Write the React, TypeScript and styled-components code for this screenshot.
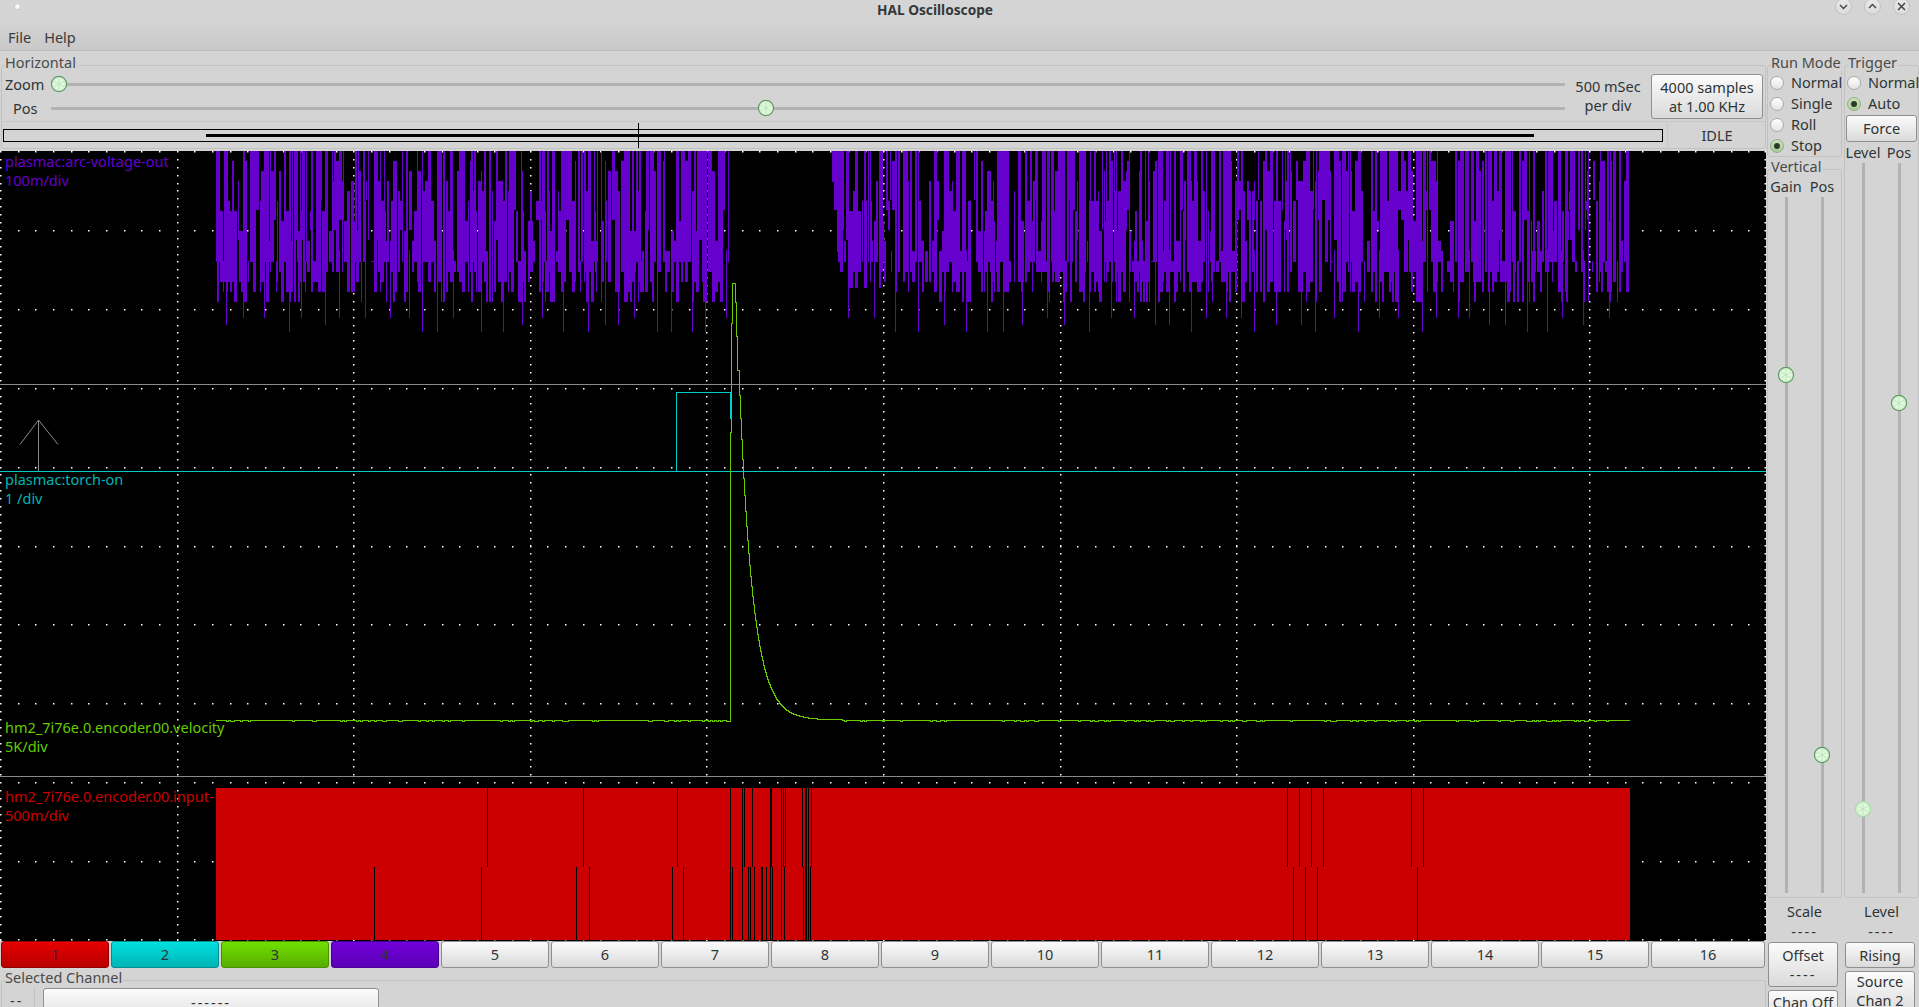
import styled, { createGlobalStyle } from "styled-components";

const TEXT = "#2e3436";
const PURPLE = "#6600cc";
const CYAN = "#00cccc";
const GREEN = "#66cc00";
const RED = "#cc0000";

const GlobalStyle = createGlobalStyle`
  html, body {
    margin: 0;
    padding: 0;
    background: #d4d4d4;
  }
  * {
    box-sizing: border-box;
  }
`;

// small seeded generator so the noise looks the same on every load
const makeRandom = (seed: number) => () => {
  seed = (seed + 0x6d2b79f5) | 0;
  let t = Math.imul(seed ^ (seed >>> 15), 1 | seed);
  t = (t + Math.imul(t ^ (t >>> 7), 61 | t)) ^ t;
  return ((t ^ (t >>> 14)) >>> 0) / 4294967296;
};

const bar = (x: number, top: number, bottom: number, w: number) =>
  `M${x} ${top}h${w}v${bottom - top}h${-w}z`;

const buildGrid = () => {
  let d = "";
  for (let i = 0; i <= 10; i++) {
    const y = Math.round(151 + 78.9 * i - (i === 10 ? 1 : 0));
    for (let x = 0; x < 1766; x += 17.66) d += bar(Math.round(x), y, y + 1.5, 1.5);
  }
  for (let j = 0; j <= 10; j++) {
    const x = j === 10 ? 1764.5 : Math.round(176.6 * j);
    for (let y = 151; y < 941; y += 7.89) d += bar(x, Math.round(y), Math.round(y) + 1.5, 1.5);
  }
  return d;
};

const buildVoltage = () => {
  const rnd = makeRandom(4711);
  let d = "";
  const span = (from: number, to: number) => {
    let x = from;
    let nextSpike = from + 10;
    while (x < to) {
      const w = Math.min([1, 1, 2, 2, 3][Math.floor(rnd() * 5)], to - x);
      let top = rnd() < 0.45 ? 151 : 151 + Math.floor(rnd() * 12) * 10;
      let bottom = rnd() < 0.15 ? 200 + Math.floor(rnd() * 5) * 10 : 262 + Math.floor(rnd() * 5) * 10;
      if (from > 800 && x < 880) {
        bottom = Math.min(bottom, Math.min(182 + (x - 832) * 14, 288));
        if (x < 838) top = 151;
      }
      if (top < bottom) d += bar(x, top, bottom, w);
      if (x >= nextSpike && (from < 800 || x > 846)) {
        d += bar(x, 250, 318 + Math.floor(rnd() * 3) * 7, 1);
        nextSpike = x + 10 + rnd() * 16;
      }
      x += w + (rnd() < 0.16 ? 1 : 0);
    }
  };
  span(216, 729);
  span(832, 1629);
  return d;
};

const buildVelocity = () => {
  const rnd = makeRandom(99);
  let d = "M216 720.5";
  for (let x = 218; x < 728; x += 2) d += `H${x}V${rnd() < 0.2 ? 721.5 : 720.5}`;
  d += "H730.5V432H731.5V323H732.5V283.5H735.5V302H736.5V336H737.5V370";
  for (let x = 738; x <= 840; x += 1) {
    const y = 720 - 437 * Math.exp(-(x - 735) / 13.5);
    d += `H${x + 0.5}V${y.toFixed(1)}`;
  }
  for (let x = 842; x <= 1630; x += 2) d += `H${x}V${rnd() < 0.2 ? 721.5 : 720.5}`;
  return d;
};

const upperGaps = [487, 583, 677, 730, 742, 744, 752, 770, 771, 781, 783, 785, 802, 805, 806, 808, 811, 1287, 1299, 1311, 1323, 1411, 1423];
const lowerGaps = [374, 481, 576, 589, 672, 683, 730, 732, 742, 748, 750, 754, 761, 762, 766, 770, 772, 781, 784, 803, 805, 806, 808, 810, 1293, 1305, 1317, 1417];

const buildInputGaps = () =>
  upperGaps.map((x) => bar(x, 788, 867, 1)).join("") +
  lowerGaps.map((x) => bar(x, 867, 940, 1)).join("");

const gridPath = buildGrid();
const voltagePath = buildVoltage();
const velocityPath = buildVelocity();
const inputGapPath = buildInputGaps();

const Thumb = ({ pale }: { pale?: boolean }) => (
  <svg width="17" height="17" viewBox="0 0 17 17">
    <circle cx="8.5" cy="8.5" r="7.6" fill="#d4f1cf" stroke={pale ? "#a8dca8" : "#5f9a68"} strokeWidth="1.2" />
    <circle cx="8.5" cy="8.5" r="5.6" fill="#e2f7df" />
    <path
      d="M8.5 3v11M3.7 5.7l9.6 5.6M3.7 11.3l9.6-5.6"
      stroke="#bfe8ba"
      strokeWidth="1"
    />
    <circle cx="8.5" cy="8.5" r="1.2" fill="#bfe8ba" />
  </svg>
);

const Scope = () => (
  <Canvas>
    <ScopeSvg width="1766" height="790" viewBox="0 151 1766 790">
      <GridDots d={gridPath} />
      <path d="M0 384.5H1766M0 776.5H1766" stroke="#8a8a8a" strokeWidth="1" />
      <path d={voltagePath} fill={PURPLE} />
      <path d="M0 471.5H1766" stroke={CYAN} strokeWidth="1" />
      <path d="M676.5 471V392.5H730.5V419" stroke={CYAN} strokeWidth="1" fill="none" />
      <path d={velocityPath} stroke={GREEN} strokeWidth="1" fill="none" />
      <path d="M216 788H1630V940H216z" fill={RED} />
      <path d={inputGapPath} fill="#000" />
      <ArrowMark d="M38.5 471V420M20 444.5L38.5 420L58 444.5" />
    </ScopeSvg>
    <TraceLabel $color={PURPLE} $top={1}>
      plasmac:arc-voltage-out
      <br />
      100m/div
    </TraceLabel>
    <TraceLabel $color="#00b4b4" $top={319}>
      plasmac:torch-on
      <br />1 /div
    </TraceLabel>
    <TraceLabel $color={GREEN} $top={567}>
      hm2_7i76e.0.encoder.00.velocity
      <br />
      5K/div
    </TraceLabel>
    <TraceLabel $color={RED} $top={636}>
      hm2_7i76e.0.encoder.00.input-
      <br />
      500m/div
    </TraceLabel>
  </Canvas>
);

const channelColors: Record<number, [string, string, string]> = {
  1: ["#e60000", "#b80000", "#8f0000"],
  2: ["#00e0e0", "#00b4b4", "#008f8f"],
  3: ["#70e000", "#58ac00", "#4a8f00"],
  4: ["#7000d8", "#5c00b8", "#4a0096"],
};

const App = () => (
  <Page>
    <GlobalStyle />
    <Header>
      <TitleBar>
        <WindowDot />
        <Title>HAL Oscilloscope</Title>
        <WindowButtons>
          <WindowButton>
            <svg width="11" height="11" viewBox="0 0 11 11">
              <path d="M2 4l3.5 3.5L9 4" fill="none" stroke="#444" strokeWidth="1.4" />
            </svg>
          </WindowButton>
          <WindowButton>
            <svg width="11" height="11" viewBox="0 0 11 11">
              <path d="M2 7l3.5-3.5L9 7" fill="none" stroke="#444" strokeWidth="1.4" />
            </svg>
          </WindowButton>
          <WindowButton>
            <svg width="11" height="11" viewBox="0 0 11 11">
              <path d="M2 2l7 7M9 2l-7 7" fill="none" stroke="#444" strokeWidth="1.5" />
            </svg>
          </WindowButton>
        </WindowButtons>
      </TitleBar>
      <MenuBar>
        <MenuItem>File</MenuItem>
        <MenuItem>Help</MenuItem>
      </MenuBar>
    </Header>

    <Body>
      <MainColumn>
        <HorizontalFrame>
          <Legend>Horizontal</Legend>
          <ZoomArea>
            <SliderRows>
              <SliderRow>
                <RowLabel>Zoom</RowLabel>
                <HSlider>
                  <HThumb $pos={0.53}>
                    <Thumb />
                  </HThumb>
                </HSlider>
              </SliderRow>
              <SliderRow>
                <RowLabel $indent>Pos</RowLabel>
                <HSlider>
                  <HThumb $pos={47.2}>
                    <Thumb />
                  </HThumb>
                </HSlider>
              </SliderRow>
            </SliderRows>
            <TimeBase>
              500 mSec
              <br />
              per div
            </TimeBase>
            <SamplesButton>
              4000 samples
              <br />
              at 1.00 KHz
            </SamplesButton>
          </ZoomArea>
          <StatusArea>
            <RecordStrip>
              <RecordFill />
              <RecordCursor />
            </RecordStrip>
            <StateText>IDLE</StateText>
          </StatusArea>
        </HorizontalFrame>

        <Scope />

        <ChannelRow>
          {Array.from({ length: 16 }, (_, i) => (
            <ChannelButton key={i} $colors={channelColors[i + 1]}>
              {i + 1}
            </ChannelButton>
          ))}
        </ChannelRow>

        <SelectedFrame>
          <Legend>Selected Channel</Legend>
          <SelectedRow>
            <SelectedIndex>
              <Dashes>--</Dashes>
            </SelectedIndex>
            <SelectedButton>
              <Dashes>------</Dashes>
            </SelectedButton>
          </SelectedRow>
        </SelectedFrame>
      </MainColumn>

      <SideColumn>
        <VerticalSide>
          <RunFrame>
            <Legend>Run Mode</Legend>
            <Radio label="Normal" />
            <Radio label="Single" />
            <Radio label="Roll" />
            <Radio label="Stop" checked />
          </RunFrame>
          <VerticalFrame>
            <Legend>Vertical</Legend>
            <SliderHeads>
              <span>Gain</span>
              <span>Pos</span>
            </SliderHeads>
            <SliderPair $height={696}>
              <VSlider>
                <VThumb $pos={25.6}>
                  <Thumb />
                </VThumb>
              </VSlider>
              <VSlider>
                <VThumb $pos={80.2}>
                  <Thumb />
                </VThumb>
              </VSlider>
            </SliderPair>
          </VerticalFrame>
          <ReadOut>
            Scale
            <br />
            <Dashes>----</Dashes>
          </ReadOut>
          <OffsetButton>
            Offset
            <br />
            <Dashes>----</Dashes>
          </OffsetButton>
          <ChanOffButton>Chan Off</ChanOffButton>
        </VerticalSide>

        <TriggerSide>
          <TriggerFrame>
            <Legend>Trigger</Legend>
            <Radio label="Normal" />
            <Radio label="Auto" checked />
            <ForceButton>Force</ForceButton>
            <SliderHeads>
              <span>Level</span>
              <span>Pos</span>
            </SliderHeads>
            <SliderPair $height={730}>
              <VSlider>
                <VThumb $pos={88.5}>
                  <Thumb pale />
                </VThumb>
              </VSlider>
              <VSlider>
                <VThumb $pos={32.9}>
                  <Thumb />
                </VThumb>
              </VSlider>
            </SliderPair>
          </TriggerFrame>
          <ReadOut>
            Level
            <br />
            <Dashes>----</Dashes>
          </ReadOut>
          <RisingButton>Rising</RisingButton>
          <SourceButton>
            Source
            <br />
            Chan 2
          </SourceButton>
        </TriggerSide>
      </SideColumn>
    </Body>
  </Page>
);

const Radio = ({ label, checked }: { label: string; checked?: boolean }) => (
  <RadioRow>
    <RadioMark $checked={checked} />
    {label}
  </RadioRow>
);

const Page = styled.div`
  display: flex;
  flex-direction: column;
  width: 1919px;
  height: 1007px;
  overflow: hidden;
  background: #d4d4d4;
  color: ${TEXT};
  font: 14.5px/19px "Noto Sans", "DejaVu Sans", sans-serif;
`;

const Header = styled.header`
  display: flex;
  flex-direction: column;
  height: 51px;
  flex: none;
  background: linear-gradient(#d5d5d5 0%, #d4d4d4 40%, #c9c9c9 100%);
  border-bottom: 1px solid #bdbdbd;
`;

const TitleBar = styled.div`
  display: grid;
  grid-template-columns: 35px 1fr 84px;
  height: 20px;
`;

const WindowDot = styled.span`
  width: 7px;
  height: 7px;
  margin: 3px 0 0 14px;
  border-radius: 50%;
  background: #f8f8f8;
  border: 1px solid #c4c4c4;
`;

const Title = styled.div`
  text-align: center;
  font-size: 13.7px;
  font-weight: 700;
  line-height: 20px;
  color: #33393b;
`;

const WindowButtons = styled.div`
  display: flex;
  gap: 12px;
  margin-top: -2px;
  height: 17px;
`;

const WindowButton = styled.span`
  display: flex;
  align-items: center;
  justify-content: center;
  width: 17px;
  height: 17px;
  border-radius: 50%;
  background: linear-gradient(#e8e8e8, #dcdcdc);
  border: 1px solid #c0c0c0;
`;

const MenuBar = styled.nav`
  display: flex;
  gap: 13px;
  padding: 8px 0 0 8px;
`;

const MenuItem = styled.span`
  color: #3a3a3a;
`;

const Body = styled.div`
  display: flex;
  flex: 1;
  min-height: 0;
`;

const MainColumn = styled.main`
  display: flex;
  flex-direction: column;
  width: 1766px;
  flex: none;
`;

const Frame = styled.section`
  flex: none;
  border: 1px solid #c2c2c2;
  border-radius: 3px;
`;

const Legend = styled.div`
  width: fit-content;
  height: 16px;
  margin: -12px 0 2px 3px;
  padding-right: 1px;
  line-height: 16px;
  white-space: nowrap;
  color: #4a4a4a;
  background: #d4d4d4;
`;

const Dashes = styled.span`
  letter-spacing: 2px;
`;

const HorizontalFrame = styled(Frame)`
  display: flex;
  flex-direction: column;
  height: 84px;
  margin: 14px 0 0 1px;
  width: 1765px;
`;

const ZoomArea = styled.div`
  display: flex;
  height: 50px;
  padding: 0 2px 0 3px;
  border-bottom: 1px solid #c8c8c8;
  align-items: flex-start;
`;

const SliderRows = styled.div`
  display: flex;
  flex-direction: column;
  flex: 1;
`;

const SliderRow = styled.div`
  display: flex;
  align-items: center;
  height: 24px;
`;

const RowLabel = styled.span<{ $indent?: boolean }>`
  width: 46px;
  padding-left: ${(props) => (props.$indent ? "8px" : "0")};
  flex: none;
`;

const HSlider = styled.div`
  position: relative;
  flex: 1;
  height: 3px;
  background: #b2b2b2;
`;

const HThumb = styled.span<{ $pos: number }>`
  position: absolute;
  left: ${(props) => props.$pos}%;
  top: 50%;
  display: flex;
  transform: translate(-50%, -50%);
`;

const TimeBase = styled.div`
  width: 86px;
  padding-top: 5px;
  text-align: center;
  flex: none;
`;

const GtkButton = styled.button`
  display: block;
  font: inherit;
  color: ${TEXT};
  padding: 0;
  text-align: center;
  border: 1px solid #8f8f8f;
  border-radius: 3px;
  background: linear-gradient(#fbfbfb, #dadada);
`;

const SamplesButton = styled(GtkButton)`
  width: 112px;
  height: 45px;
  margin-top: 2px;
  flex: none;
`;

const StatusArea = styled.div`
  display: flex;
  align-items: center;
  height: 26px;
  padding-left: 1px;
`;

const RecordStrip = styled.div`
  position: relative;
  width: 1660px;
  height: 13px;
  border: 1px solid #000;
  flex: none;
`;

const RecordFill = styled.div`
  position: absolute;
  left: 202px;
  width: 1328px;
  top: 4px;
  height: 3px;
  background: #000;
`;

const RecordCursor = styled.div`
  position: absolute;
  left: 634px;
  top: -7px;
  width: 1px;
  height: 25px;
  background: #000;
`;

const StateText = styled.div`
  flex: 1;
  margin-left: 4px;
  padding-left: 1px;
  line-height: 24px;
  text-align: center;
  border-left: 1px solid #c8c8c8;
`;

const Canvas = styled.div`
  position: relative;
  width: 1766px;
  height: 790px;
  margin-top: 2px;
  flex: none;
  background: #000;
  overflow: hidden;
`;

const ScopeSvg = styled.svg`
  display: block;
  shape-rendering: crispEdges;
`;

const GridDots = styled.path`
  fill: #fff;
  shape-rendering: auto;
`;

const ArrowMark = styled.path`
  fill: none;
  stroke: #8a8a8a;
  stroke-width: 1;
  shape-rendering: auto;
`;

const TraceLabel = styled.div<{ $color: string; $top: number }>`
  position: absolute;
  left: 5px;
  top: ${(props) => props.$top}px;
  color: ${(props) => props.$color};
  white-space: nowrap;
`;

const ChannelRow = styled.div`
  display: grid;
  grid-template-columns: repeat(15, 108px) 114px;
  gap: 2px;
  height: 27px;
  padding-left: 1px;
  flex: none;
`;

const ChannelButton = styled(GtkButton)<{ $colors?: [string, string, string] }>`
  height: 27px;
  line-height: 25px;
  ${(props) =>
    props.$colors &&
    `background: linear-gradient(${props.$colors[0]}, ${props.$colors[1]});
     border-color: ${props.$colors[2]};`}
`;

const SelectedFrame = styled(Frame)`
  margin: 12px 0 0 1px;
  width: 1765px;
  height: 60px;
`;

const SelectedRow = styled.div`
  display: flex;
  align-items: flex-start;
  margin-top: 3px;
`;

const SelectedIndex = styled.div`
  width: 33px;
  height: 40px;
  padding: 3px 0 0 8px;
  border-right: 1px solid #c2c2c2;
`;

const SelectedButton = styled(GtkButton)`
  width: 336px;
  height: 40px;
  margin-left: 8px;
  padding-bottom: 12px;
`;

const SideColumn = styled.aside`
  display: flex;
  flex: 1;
  min-width: 0;
`;

const VerticalSide = styled.div`
  display: flex;
  flex-direction: column;
  width: 77px;
  padding: 0 1px 0 1px;
  flex: none;
`;

const TriggerSide = styled.div`
  display: flex;
  flex-direction: column;
  width: 76px;
  padding-left: 1px;
  flex: none;
`;

const RunFrame = styled(Frame)`
  height: 92px;
  margin-top: 14px;
`;

const RadioRow = styled.label`
  display: flex;
  align-items: center;
  height: 21px;
  padding-left: 2px;
  white-space: nowrap;
`;

const RadioMark = styled.span<{ $checked?: boolean }>`
  display: flex;
  align-items: center;
  justify-content: center;
  width: 14px;
  height: 14px;
  margin-right: 7px;
  border-radius: 50%;
  flex: none;
  border: 1px solid ${(props) => (props.$checked ? "#8fb080" : "#a8a8a8")};
  background: ${(props) =>
    props.$checked ? "linear-gradient(#cde0bd, #a9cc98)" : "linear-gradient(#fff, #e4e4e4)"};
  &::after {
    content: "";
    width: 6px;
    height: 6px;
    border-radius: 50%;
    background: ${(props) => (props.$checked ? "#2e3a28" : "transparent")};
  }
`;

const VerticalFrame = styled(Frame)`
  display: flex;
  flex-direction: column;
  height: 729px;
  margin-top: 12px;
`;

const SliderHeads = styled.div`
  display: grid;
  grid-template-columns: 36px 36px;
  justify-items: center;
  height: 20px;
  margin-top: 1px;
  white-space: nowrap;
`;

const SliderPair = styled.div<{ $height: number }>`
  display: grid;
  grid-template-columns: 36px 36px;
  justify-items: center;
  height: ${(props) => props.$height}px;
`;

const VSlider = styled.div`
  position: relative;
  width: 3px;
  height: 100%;
  background: #b2b2b2;
`;

const VThumb = styled.span<{ $pos: number }>`
  position: absolute;
  left: 50%;
  top: ${(props) => props.$pos}%;
  display: flex;
  transform: translate(-50%, -50%);
`;

const ReadOut = styled.div`
  height: 44px;
  padding-top: 3px;
  text-align: center;
  line-height: 20px;
  flex: none;
`;

const OffsetButton = styled(GtkButton)`
  width: 70px;
  height: 45px;
  margin-left: 1px;
  flex: none;
`;

const ChanOffButton = styled(GtkButton)`
  width: 70px;
  height: 36px;
  margin: 3px 0 0 1px;
  padding-bottom: 12px;
  flex: none;
`;

const TriggerFrame = styled(Frame)`
  display: flex;
  flex-direction: column;
  height: 833px;
  margin-top: 14px;
`;

const ForceButton = styled(GtkButton)`
  width: 71px;
  height: 27px;
  margin: 1px 0 0 1px;
  flex: none;
`;

const RisingButton = styled(GtkButton)`
  width: 70px;
  height: 26px;
  margin-left: 1px;
  flex: none;
`;

const SourceButton = styled(GtkButton)`
  width: 70px;
  height: 46px;
  margin: 3px 0 0 1px;
  padding-bottom: 6px;
  flex: none;
`;

export default App;
